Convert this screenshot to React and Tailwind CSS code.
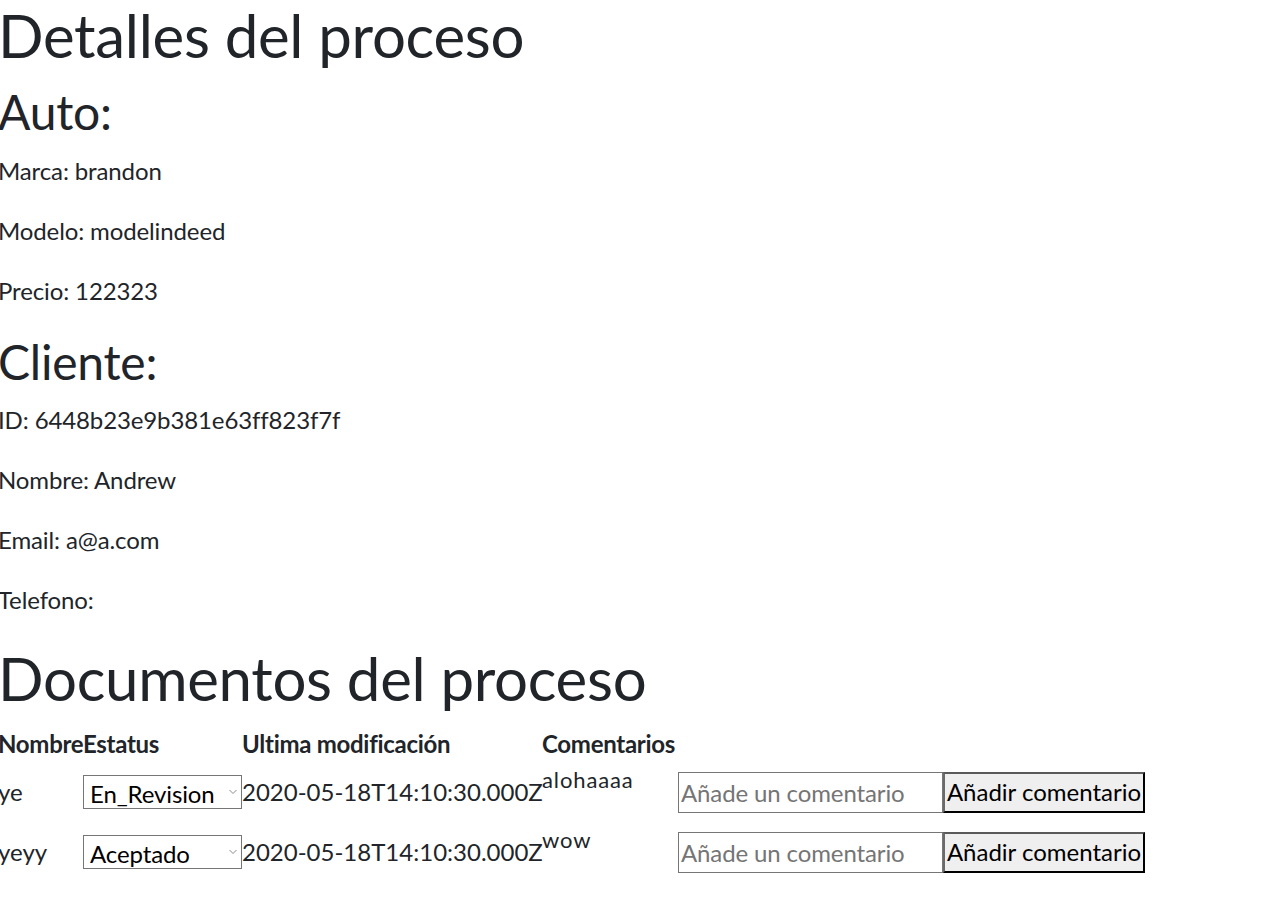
import React from "react";

const font = { fontFamily: "Lato, 'Noto Sans', sans-serif" };

function Chevron() {
  return (
    <svg
      className="pointer-events-none absolute right-[5px] top-1/2 -translate-y-1/2"
      width="8"
      height="5"
      viewBox="0 0 8 5"
      fill="none"
    >
      <path d="M0.5 0.5 L4 4 L7.5 0.5" stroke="#8a8a8a" strokeWidth="1" />
    </svg>
  );
}

function Row({ name, status, date, comment }) {
  return (
    <tr>
      <td className="p-0 align-middle">{name}</td>
      <td className="p-0 align-middle">
        <div className="relative w-[159px] h-[34px]">
          <select
            defaultValue={status}
            className="appearance-none w-[159px] h-[34px] border border-[#767676] bg-white pl-[6px] text-[24px] text-black leading-normal tracking-[-0.005em]"
          >
            <option>En_Revision</option>
            <option>Aceptado</option>
            <option>Rechazado</option>
          </select>
          <Chevron />
        </div>
      </td>
      <td className="p-0 align-middle whitespace-nowrap">{date}</td>
      <td className="p-0 align-top">
        <p className="m-0 mb-[24px] text-[22px] leading-[36px] tracking-[0.04em]">{comment}</p>
      </td>
      <td className="p-0 align-middle">
        <input
          placeholder="Añade un comentario"
          className="block w-[265px] h-[41px] border border-[#767676] bg-white px-[2px] py-[1px] text-[24px] text-black placeholder:text-[#757575] tracking-[-0.005em]"
        />
      </td>
      <td className="p-0 align-middle">
        <button className="block w-[202px] h-[41px] border-2 border-t-[#5a5a5a] border-l-[#6a6a6a] border-r-black border-b-black bg-[#efefef] px-0 text-[24px] text-black leading-normal whitespace-nowrap">
          Añadir comentario
        </button>
      </td>
    </tr>
  );
}

export default function App() {
  const p = "mb-[24px] tracking-[-0.005em]";
  const h1 = "text-[60px] leading-[1.2] font-normal mb-[12px] tracking-[-0.005em]";
  const h2 = "text-[48px] leading-[1.2] font-normal mb-[12px] tracking-[-0.005em]";
  return (
    <div className="bg-white min-h-[899px] text-[#212529] text-[24px] leading-[1.5] -ml-[2px] -mt-[1px]" style={font}>
      <h1 className={h1}>Detalles del proceso</h1>
      <h2 className={h2}>Auto:</h2>
      <p className={p}>Marca: brandon</p>
      <p className={p}>Modelo: modelindeed</p>
      <p className={p}>Precio: 122323</p>
      <h2 className={h2}>Cliente:</h2>
      <p className={p}>ID: 6448b23e9b381e63ff823f7f</p>
      <p className={p}>Nombre: Andrew</p>
      <p className={p}>Email: a@a.com</p>
      <p className={p}>Telefono:</p>
      <h1 className={h1}>Documentos del proceso</h1>
      <table className="border-collapse table-fixed w-[1147px]">
        <colgroup>
          <col className="w-[85px]" />
          <col className="w-[159px]" />
          <col className="w-[300px]" />
          <col className="w-[136px]" />
          <col className="w-[265px]" />
          <col className="w-[202px]" />
        </colgroup>
        <thead>
          <tr>
            <th className="p-0 text-left font-bold whitespace-nowrap tracking-[-0.012em]">Nombre</th>
            <th className="p-0 text-left font-bold whitespace-nowrap tracking-[-0.012em]">Estatus</th>
            <th className="p-0 text-left font-bold whitespace-nowrap tracking-[-0.012em]">Ultima modificación</th>
            <th className="p-0 text-left font-bold whitespace-nowrap tracking-[-0.012em]">Comentarios</th>
            <th className="p-0"></th>
            <th className="p-0"></th>
          </tr>
        </thead>
        <tbody>
          <Row name="ye" status="En_Revision" date="2020-05-18T14:10:30.000Z" comment="alohaaaa" />
          <Row name="yeyy" status="Aceptado" date="2020-05-18T14:10:30.000Z" comment="wow" />
        </tbody>
      </table>
    </div>
  );
}
